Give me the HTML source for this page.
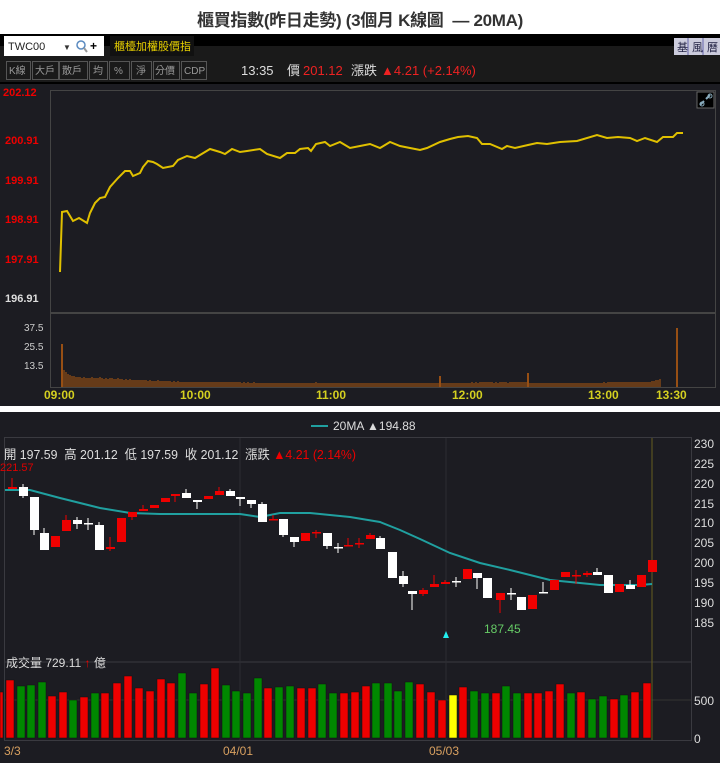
<!DOCTYPE html><html><head><meta charset="utf-8"><style>
*{margin:0;padding:0;box-sizing:border-box}
body{width:720px;height:763px;background:#fff;font-family:"Liberation Sans","Noto Sans CJK TC",sans-serif;overflow:hidden;position:relative}
.t{position:absolute;white-space:nowrap}
</style></head><body>
<div class="t" style="left:0;top:6px;width:720px;text-align:center;font-size:17px;font-weight:bold;color:#333;letter-spacing:-0.3px">櫃買指數(昨日走勢) (3個月 K線圖 &nbsp;— 20MA)</div>
<svg style="position:absolute;left:0;top:34px" width="720" height="372" viewBox="0 34 720 372" font-family="Liberation Sans,Noto Sans CJK TC,sans-serif">
<rect x="0" y="34" width="720" height="372" fill="#000"/>
<rect x="0" y="84" width="720" height="322" fill="#1c1c22"/>
<rect x="0" y="46" width="720" height="36" fill="#1a1a1a"/>
<rect x="0" y="34" width="720" height="12" fill="#000"/>
<rect x="4" y="36" width="100" height="20" fill="#fff"/>
<text x="8" y="50" font-size="11" fill="#222">TWC00</text>
<text x="63" y="50" font-size="8" fill="#333">▼</text>
<circle cx="81" cy="45" r="4" fill="none" stroke="#5a8ac0" stroke-width="1.5"/><line x1="84" y1="48" x2="87" y2="52" stroke="#999" stroke-width="2"/>
<text x="90" y="50" font-size="12" fill="#000" font-weight="bold">+</text>
<rect x="110" y="36" width="84" height="20" fill="#111"/>
<text x="114" y="50" font-size="11" fill="#e8d000">櫃檯加權股價指</text>
<rect x="674" y="38" width="46" height="17" fill="#ccd"/>
<text x="677" y="51" font-size="11" fill="#224">基</text><text x="692" y="51" font-size="11" fill="#224">風</text><text x="707" y="51" font-size="11" fill="#224">曆</text>
<line x1="688" y1="38" x2="688" y2="55" stroke="#66a"/><line x1="703" y1="38" x2="703" y2="55" stroke="#66a"/>
<g fill="none" stroke="#555"><rect x="6.5" y="61.5" width="24" height="18"/><rect x="32.5" y="61.5" width="26" height="18"/><rect x="59.5" y="61.5" width="28" height="18"/><rect x="89.5" y="61.5" width="18" height="18"/><rect x="109.5" y="61.5" width="20" height="18"/><rect x="131.5" y="61.5" width="20" height="18"/><rect x="153.5" y="61.5" width="26" height="18"/><rect x="181.5" y="61.5" width="25" height="18"/></g>
<g font-size="10" fill="#999"><text x="9" y="74">K線</text><text x="35" y="74">大戶</text><text x="62" y="74">散戶</text><text x="93" y="74">均</text><text x="114" y="74">%</text><text x="136" y="74">淨</text><text x="155" y="74">分價</text><text x="184" y="74">CDP</text></g>
<text x="241" y="75" font-size="13" fill="#ddd">13:35</text>
<text x="287" y="75" font-size="13" fill="#ddd">價</text>
<text x="303" y="75" font-size="13" fill="#e22">201.12</text>
<text x="351" y="75" font-size="13" fill="#ddd">漲跌</text>
<text x="381" y="75" font-size="13" fill="#e22">▲4.21 (+2.14%)</text>
<rect x="50.5" y="90.5" width="665" height="297" fill="none" stroke="#444"/>
<line x1="51" y1="313" x2="715" y2="313" stroke="#444" stroke-width="2"/>
<g font-size="11" font-weight="bold" fill="#e00"><text x="3" y="96">202.12</text><text x="5" y="144">200.91</text><text x="5" y="184">199.91</text><text x="5" y="223">198.91</text><text x="5" y="263">197.91</text></g>
<text x="5" y="302" font-size="11" font-weight="bold" fill="#ddd">196.91</text>
<g font-size="10" fill="#ccc"><text x="24" y="331">37.5</text><text x="24" y="350">25.5</text><text x="24" y="369">13.5</text></g>
<rect x="697" y="92" width="17" height="16" fill="#000" stroke="#666"/>
<path d="M700 105l4-4M706 99l4-4" stroke="#8ab" stroke-width="2" fill="none"/><circle cx="702" cy="104" r="2" fill="none" stroke="#8ab"/><circle cx="710" cy="96" r="2" fill="none" stroke="#8ab"/>
<polyline fill="none" stroke="#e0c000" stroke-width="2" points="60,272 62,212 67,211 73,221 79,218 87,223 90,213 95,203 100,198 105,197 110,187 118,178 125,171 130,171 133,176 140,173 143,167 148,161 153,162 157,164 163,168 173,166 178,160 187,156 195,158 200,155 210,149 220,152 225,154 232,149 240,152 247,151 260,149 267,154 280,158 287,153 295,153 300,149 308,148 311,151 316,144 325,142 330,146 340,142 350,148 360,146 370,144 380,148 390,142 400,146 410,148 420,150 427,148 440,142 450,139 458,137 468,136 477,138 482,144 490,144 502,149 507,146 515,148 528,145 537,143 547,144 560,142 577,141 597,135 607,138 618,137 630,138 637,141 645,138 657,142 663,137 673,137 677,133 683,133"/>
<path d="M62 387V344M677 387V328M440 387V376M528 387V373" stroke="#c06010" stroke-width="1.5"/>
<path d="M64 387V370M66 387V372M68 387V374M70 387V375M72 387V376M74 387V376M76 387V377M78 387V377M80 387V377M82 387V378M84 387V377M86 387V378M88 387V378M90 387V378M92 387V377M94 387V378M96 387V378M98 387V378M100 387V377M102 387V378M104 387V379M106 387V378M108 387V379M110 387V378M112 387V378M114 387V379M116 387V379M118 387V378M120 387V379M122 387V379M124 387V380M126 387V379M128 387V380M130 387V379M132 387V380M134 387V380M136 387V380M138 387V380M140 387V380M142 387V380M144 387V380M146 387V380M148 387V381M150 387V380M152 387V381M154 387V381M156 387V381M158 387V380M160 387V381M162 387V381M164 387V381M166 387V381M168 387V381M170 387V381M172 387V382M174 387V381M176 387V382M178 387V381M180 387V382M182 387V382M184 387V382M186 387V382M188 387V382M190 387V382M192 387V382M194 387V382M196 387V382M198 387V382M200 387V382M202 387V382M204 387V382M206 387V382M208 387V382M210 387V382M212 387V382M214 387V382M216 387V382M218 387V382M220 387V382M222 387V382M224 387V382M226 387V382M228 387V382M230 387V382M232 387V382M234 387V382M236 387V382M238 387V382M240 387V382M242 387V383M244 387V382M246 387V383M248 387V382M250 387V383M252 387V383M254 387V382M256 387V383M258 387V383M260 387V383M262 387V383M264 387V383M266 387V383M268 387V383M270 387V383M272 387V383M274 387V383M276 387V383M278 387V383M280 387V383M282 387V383M284 387V383M286 387V383M288 387V383M290 387V383M292 387V383M294 387V383M296 387V383M298 387V383M300 387V383M302 387V383M304 387V383M306 387V383M308 387V383M310 387V383M312 387V383M314 387V383M316 387V382M318 387V383M320 387V383M322 387V383M324 387V383M326 387V383M328 387V383M330 387V383M332 387V383M334 387V383M336 387V383M338 387V383M340 387V383M342 387V383M344 387V383M346 387V383M348 387V383M350 387V383M352 387V383M354 387V383M356 387V383M358 387V383M360 387V383M362 387V383M364 387V383M366 387V383M368 387V383M370 387V383M372 387V383M374 387V383M376 387V383M378 387V383M380 387V383M382 387V383M384 387V383M386 387V383M388 387V383M390 387V383M392 387V383M394 387V383M396 387V383M398 387V383M400 387V383M402 387V383M404 387V383M406 387V383M408 387V383M410 387V383M412 387V383M414 387V383M416 387V383M418 387V383M420 387V383M422 387V383M424 387V383M426 387V383M428 387V383M430 387V383M432 387V383M434 387V383M436 387V383M438 387V383M442 387V383M444 387V383M446 387V383M448 387V383M450 387V383M452 387V383M454 387V383M456 387V383M458 387V383M460 387V383M462 387V383M464 387V383M466 387V383M468 387V383M470 387V383M472 387V382M474 387V383M476 387V382M478 387V383M480 387V382M482 387V382M484 387V382M486 387V382M488 387V382M490 387V382M492 387V382M494 387V383M496 387V382M498 387V383M500 387V382M502 387V382M504 387V382M506 387V382M508 387V383M510 387V382M512 387V382M514 387V382M516 387V382M518 387V382M520 387V382M522 387V382M524 387V382M526 387V382M530 387V383M532 387V383M534 387V383M536 387V383M538 387V383M540 387V383M542 387V383M544 387V383M546 387V383M548 387V383M550 387V383M552 387V383M554 387V383M556 387V383M558 387V383M560 387V383M562 387V383M564 387V383M566 387V383M568 387V383M570 387V383M572 387V383M574 387V383M576 387V383M578 387V383M580 387V383M582 387V383M584 387V383M586 387V383M588 387V383M590 387V383M592 387V383M594 387V383M596 387V383M598 387V383M600 387V383M602 387V383M604 387V382M606 387V383M608 387V382M610 387V382M612 387V382M614 387V382M616 387V382M618 387V382M620 387V382M622 387V382M624 387V382M626 387V382M628 387V382M630 387V382M632 387V382M634 387V382M636 387V382M638 387V382M640 387V382M642 387V382M644 387V382M646 387V382M648 387V382M650 387V382M652 387V381M654 387V381M656 387V380M658 387V380M660 387V379" stroke="#b05a10" stroke-width="1"/>
<g font-size="12" font-weight="bold" fill="#d4d020"><text x="44" y="399">09:00</text><text x="180" y="399">10:00</text><text x="316" y="399">11:00</text><text x="452" y="399">12:00</text><text x="588" y="399">13:00</text><text x="656" y="399">13:30</text></g>
</svg>
<svg style="position:absolute;left:0;top:412px" width="720" height="351" viewBox="0 412 720 351" font-family="Liberation Sans,Noto Sans CJK TC,sans-serif">
<rect x="0" y="412" width="720" height="351" fill="#1c1c22"/>
<line x1="311" y1="426" x2="328" y2="426" stroke="#20a0a0" stroke-width="2"/>
<text x="333" y="430" font-size="12" fill="#ddd">20MA ▲194.88</text>
<rect x="4.5" y="437.5" width="687" height="303" fill="none" stroke="#3a3a40"/>
<line x1="5" y1="662" x2="691" y2="662" stroke="#3a3a40"/>
<line x1="5" y1="700" x2="691" y2="700" stroke="#333"/>
<line x1="240" y1="438" x2="240" y2="740" stroke="#2c2c32"/>
<line x1="446" y1="438" x2="446" y2="740" stroke="#2c2c32"/>
<line x1="652" y1="438" x2="652" y2="740" stroke="#665e20"/>
<g font-size="12" fill="#ddd"><text x="694" y="448">230</text><text x="694" y="468">225</text><text x="694" y="488">220</text><text x="694" y="508">215</text><text x="694" y="527">210</text><text x="694" y="547">205</text><text x="694" y="567">200</text><text x="694" y="587">195</text><text x="694" y="607">190</text><text x="694" y="627">185</text><text x="694" y="705">500</text><text x="694" y="743">0</text></g>
<text x="4" y="459" font-size="13" fill="#ddd" textLength="352" lengthAdjust="spacingAndGlyphs">開 197.59 &nbsp;高 201.12 &nbsp;低 197.59 &nbsp;收 201.12 &nbsp;漲跌 <tspan fill="#e00">▲4.21 (2.14%)</tspan></text>
<text x="0" y="471" font-size="11" fill="#d00">221.57</text>
<text x="484" y="633" font-size="12" fill="#6c6">187.45</text>
<path d="M446 631l-3 7h6z" fill="#2ee"/>
<polyline fill="none" stroke="#20a0a0" stroke-width="2" points="5,490 30,490 60,498 100,508 130,513 160,514 240,514 260,517 280,513 310,513 350,517 380,522 400,530 420,539 450,553 480,563 510,570 550,580 600,585 640,585 652,584"/>
<g stroke-width="1">
<path d="M12 478V488" stroke="#e00"/><rect x="8" y="487" width="9" height="2" fill="#e00"/>
<path d="M23 484V498M34 497V535M44 528V550M77 517V529M88 518V530M99 522V550M186 489V498M197 500V509M230 489V496M240 497V506M251 500V508M262 502V522M283 519V537M294 537V547M327 533V549M338 543V553M380 536V549M392 552V578M403 571V587M412 591V610M456 577V587M477 573V589M487 578V598M511 588V600M521 597V610M543 582V593M597 568V575M608 575V593M630 580V589" stroke="#fff"/>
<path d="M55 536V547M66 515V531M110 537V551M121 518V542M132 512V520M143 505V510M154 505V508M165 498V502M175 494V502M208 496V499M219 487V495M273 515V520M305 533V541M316 530V538M348 538V545M359 538V548M370 533V539M423 588V596M434 575V587M445 580V584M467 569V579M500 593V613M532 595V609M554 580V590M565 572V577M576 570V584M587 571V577M619 584V592M641 575V587M652 560V572" stroke="#e00"/>
</g>
<g fill="#fff">
<rect x="19" y="487" width="9" height="9"/><rect x="30" y="497" width="9" height="33"/><rect x="40" y="533" width="9" height="17"/><rect x="73" y="520" width="9" height="4"/><rect x="84" y="523" width="9" height="1.5"/><rect x="95" y="525" width="9" height="25"/><rect x="182" y="493" width="9" height="5"/><rect x="193" y="500" width="9" height="2"/><rect x="226" y="491" width="9" height="5"/><rect x="236" y="497" width="9" height="2"/><rect x="247" y="500" width="9" height="4"/><rect x="258" y="504" width="9" height="18"/><rect x="279" y="519" width="9" height="16"/><rect x="290" y="537" width="9" height="5"/><rect x="323" y="533" width="9" height="13"/><rect x="334" y="547" width="9" height="1.5"/><rect x="376" y="538" width="9" height="11"/><rect x="388" y="552" width="9" height="26"/><rect x="399" y="576" width="9" height="8"/><rect x="408" y="591" width="9" height="3"/><rect x="452" y="581" width="9" height="1.5"/><rect x="473" y="573" width="9" height="5"/><rect x="483" y="578" width="9" height="20"/><rect x="507" y="593" width="9" height="1.5"/><rect x="517" y="597" width="9" height="13"/><rect x="539" y="592" width="9" height="1.5"/><rect x="593" y="572" width="9" height="3"/><rect x="604" y="575" width="9" height="18"/><rect x="626" y="585" width="9" height="4"/>
</g>
<g fill="#e00">
<rect x="51" y="536" width="9" height="11"/><rect x="62" y="520" width="9" height="11"/><rect x="106" y="547" width="9" height="2"/><rect x="117" y="518" width="9" height="24"/><rect x="128" y="512" width="9" height="5"/><rect x="139" y="509" width="9" height="2"/><rect x="150" y="505" width="9" height="3"/><rect x="161" y="498" width="9" height="4"/><rect x="171" y="494" width="9" height="2"/><rect x="204" y="496" width="9" height="3"/><rect x="215" y="491" width="9" height="4"/><rect x="269" y="519" width="9" height="1.5"/><rect x="301" y="533" width="9" height="8"/><rect x="312" y="532" width="9" height="1.5"/><rect x="344" y="545" width="9" height="1.5"/><rect x="355" y="543" width="9" height="1.5"/><rect x="366" y="535" width="9" height="4"/><rect x="419" y="590" width="9" height="4"/><rect x="430" y="584" width="9" height="3"/><rect x="441" y="582" width="9" height="2"/><rect x="463" y="569" width="9" height="10"/><rect x="496" y="593" width="9" height="7"/><rect x="528" y="595" width="9" height="14"/><rect x="550" y="580" width="9" height="10"/><rect x="561" y="572" width="9" height="5"/><rect x="572" y="575" width="9" height="1.5"/><rect x="583" y="573" width="9" height="2"/><rect x="615" y="584" width="9" height="8"/><rect x="637" y="575" width="9" height="12"/><rect x="648" y="560" width="9" height="12"/>
</g>
<text x="6" y="667" font-size="12" fill="#ddd">成交量 729.11 <tspan fill="#e00">↑</tspan> 億</text>
<g stroke="#111" stroke-width="0.5">
<rect x="0" y="692" width="3" height="46" fill="#e00"/>
<rect x="6" y="680" width="8" height="58" fill="#e00"/><rect x="17" y="686" width="8" height="52" fill="#080"/><rect x="27" y="685" width="8" height="53" fill="#080"/><rect x="38" y="682" width="8" height="56" fill="#080"/><rect x="48" y="696" width="8" height="42" fill="#e00"/><rect x="59" y="692" width="8" height="46" fill="#e00"/><rect x="69" y="700" width="8" height="38" fill="#080"/><rect x="80" y="697" width="8" height="41" fill="#e00"/><rect x="91" y="693" width="8" height="45" fill="#080"/><rect x="101" y="693" width="8" height="45" fill="#e00"/><rect x="113" y="683" width="8" height="55" fill="#e00"/><rect x="124" y="676" width="8" height="62" fill="#e00"/><rect x="135" y="688" width="8" height="50" fill="#e00"/><rect x="146" y="691" width="8" height="47" fill="#e00"/><rect x="157" y="679" width="8" height="59" fill="#e00"/><rect x="167" y="683" width="8" height="55" fill="#e00"/><rect x="178" y="673" width="8" height="65" fill="#080"/><rect x="189" y="693" width="8" height="45" fill="#080"/><rect x="200" y="684" width="8" height="54" fill="#e00"/><rect x="211" y="668" width="8" height="70" fill="#e00"/><rect x="222" y="685" width="8" height="53" fill="#080"/><rect x="232" y="691" width="8" height="47" fill="#080"/><rect x="243" y="693" width="8" height="45" fill="#080"/><rect x="254" y="678" width="8" height="60" fill="#080"/><rect x="264" y="688" width="8" height="50" fill="#e00"/><rect x="275" y="687" width="8" height="51" fill="#080"/><rect x="286" y="686" width="8" height="52" fill="#080"/><rect x="297" y="688" width="8" height="50" fill="#e00"/><rect x="308" y="688" width="8" height="50" fill="#e00"/><rect x="318" y="684" width="8" height="54" fill="#080"/><rect x="329" y="693" width="8" height="45" fill="#080"/><rect x="340" y="693" width="8" height="45" fill="#e00"/><rect x="351" y="692" width="8" height="46" fill="#e00"/><rect x="362" y="686" width="8" height="52" fill="#e00"/><rect x="372" y="683" width="8" height="55" fill="#080"/><rect x="384" y="683" width="8" height="55" fill="#080"/><rect x="394" y="691" width="8" height="47" fill="#080"/><rect x="405" y="682" width="8" height="56" fill="#080"/><rect x="416" y="684" width="8" height="54" fill="#e00"/><rect x="427" y="692" width="8" height="46" fill="#e00"/><rect x="438" y="700" width="8" height="38" fill="#e00"/><rect x="449" y="695" width="8" height="43" fill="#ff0"/><rect x="459" y="687" width="8" height="51" fill="#e00"/><rect x="470" y="691" width="8" height="47" fill="#080"/><rect x="481" y="693" width="8" height="45" fill="#080"/><rect x="492" y="693" width="8" height="45" fill="#e00"/><rect x="502" y="686" width="8" height="52" fill="#080"/><rect x="513" y="693" width="8" height="45" fill="#080"/><rect x="524" y="693" width="8" height="45" fill="#e00"/><rect x="534" y="693" width="8" height="45" fill="#e00"/><rect x="545" y="691" width="8" height="47" fill="#e00"/><rect x="556" y="684" width="8" height="54" fill="#e00"/><rect x="567" y="693" width="8" height="45" fill="#080"/><rect x="577" y="692" width="8" height="46" fill="#e00"/><rect x="588" y="699" width="8" height="39" fill="#080"/><rect x="599" y="696" width="8" height="42" fill="#080"/><rect x="610" y="699" width="8" height="39" fill="#e00"/><rect x="620" y="695" width="8" height="43" fill="#080"/><rect x="631" y="692" width="8" height="46" fill="#e00"/><rect x="643" y="683" width="8" height="55" fill="#e00"/>
</g>
<g font-size="12" fill="#d8a060"><text x="4" y="755">3/3</text><text x="223" y="755">04/01</text><text x="429" y="755">05/03</text></g>
</svg>
</body></html>
